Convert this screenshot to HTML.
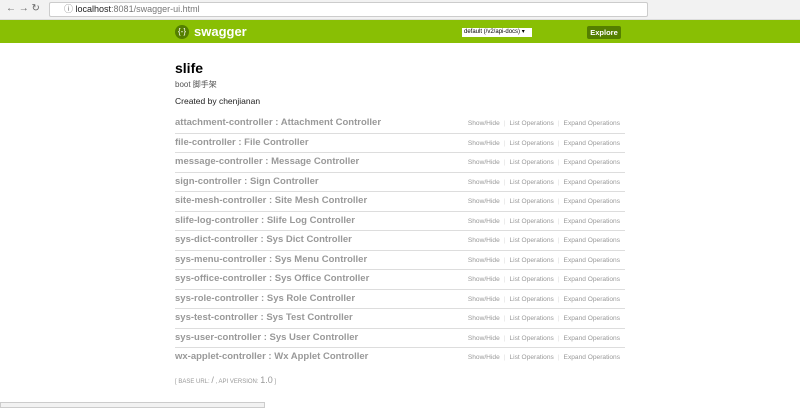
<!DOCTYPE html><html><head><style>
*{margin:0;padding:0;box-sizing:border-box}
body{width:800px;height:408px;overflow:hidden;background:#fff;font-family:"Liberation Sans",sans-serif;position:relative}
.chrome{position:absolute;top:0;left:0;width:800px;height:20px;background:#f2f2f2;border-bottom:1px solid #ddd}
.url{position:absolute;left:49px;top:2px;width:599px;height:15px;background:#fff;border:1px solid #ccc;border-radius:2px;font-size:9px;line-height:13px;padding-left:14px;color:#777}
.url b{color:#222;font-weight:normal}
.hdr{position:absolute;top:20px;left:0;width:800px;height:23px;background:#89bf04}
.logo{position:absolute;left:175px;top:5px;width:14px;height:14px;border-radius:50%;background:#547f00;color:#fff;font-size:8px;text-align:center;line-height:14px}
.brand{position:absolute;left:194px;top:4px;color:#fff;font-weight:bold;font-size:13px}
.sel{position:absolute;left:462px;top:8px;width:70px;height:9px;background:#fff;font-size:6px;line-height:9px;padding-left:2px;color:#000}
.exp{position:absolute;left:587px;top:6px;width:34px;height:13px;background:#547f00;border-radius:2px;color:#fff;font-weight:bold;font-size:7.5px;text-align:center;line-height:13px}
h1{position:absolute;left:175px;top:60px;font-size:14px;font-weight:bold;color:#000}
.d1{position:absolute;left:175px;top:79px;font-size:8px;color:#555;font-family:"Liberation Sans","Noto Sans CJK SC",sans-serif}
.d2{position:absolute;left:175px;top:96px;font-size:8.5px;color:#222}
.row{position:absolute;left:175px;width:450px;height:19.5px;border-bottom:1px solid #ddd}
.row .t{position:absolute;left:0;top:3px;font-size:9.5px;font-weight:bold;color:#999}
.row .l{position:absolute;right:5px;top:6px;font-size:6.6px;color:#999}
.row .l i{font-style:normal;color:#ddd;margin:0 4px}
.foot{position:absolute;left:175px;top:375px;font-size:6px;color:#999}
.foot span{font-size:9px}
.status{position:absolute;left:0;top:402px;width:265px;height:6px;background:#f2f2f2;border:1px solid #ccc}
</style></head><body>
<div class="chrome"><span style="position:absolute;left:6px;top:3px;font-size:10px;color:#666">← → ↻</span><div class="url">ⓘ <b>localhost</b>:8081/swagger-ui.html</div></div>
<div class="hdr"><div class="logo">{-}</div><div class="brand">swagger</div><div class="sel">default (/v2/api-docs) ▾</div><div class="exp">Explore</div></div>
<h1>slife</h1><div class="d1">boot 脚手架</div><div class="d2">Created by chenjianan</div>
<div class="row" style="top:114px"><div class="t">attachment-controller : Attachment Controller</div><div class="l">Show/Hide<i>|</i>List Operations<i>|</i>Expand Operations</div></div>
<div class="row" style="top:133.5px"><div class="t">file-controller : File Controller</div><div class="l">Show/Hide<i>|</i>List Operations<i>|</i>Expand Operations</div></div>
<div class="row" style="top:153px"><div class="t">message-controller : Message Controller</div><div class="l">Show/Hide<i>|</i>List Operations<i>|</i>Expand Operations</div></div>
<div class="row" style="top:172.5px"><div class="t">sign-controller : Sign Controller</div><div class="l">Show/Hide<i>|</i>List Operations<i>|</i>Expand Operations</div></div>
<div class="row" style="top:192px"><div class="t">site-mesh-controller : Site Mesh Controller</div><div class="l">Show/Hide<i>|</i>List Operations<i>|</i>Expand Operations</div></div>
<div class="row" style="top:211.5px"><div class="t">slife-log-controller : Slife Log Controller</div><div class="l">Show/Hide<i>|</i>List Operations<i>|</i>Expand Operations</div></div>
<div class="row" style="top:231px"><div class="t">sys-dict-controller : Sys Dict Controller</div><div class="l">Show/Hide<i>|</i>List Operations<i>|</i>Expand Operations</div></div>
<div class="row" style="top:250.5px"><div class="t">sys-menu-controller : Sys Menu Controller</div><div class="l">Show/Hide<i>|</i>List Operations<i>|</i>Expand Operations</div></div>
<div class="row" style="top:270px"><div class="t">sys-office-controller : Sys Office Controller</div><div class="l">Show/Hide<i>|</i>List Operations<i>|</i>Expand Operations</div></div>
<div class="row" style="top:289.5px"><div class="t">sys-role-controller : Sys Role Controller</div><div class="l">Show/Hide<i>|</i>List Operations<i>|</i>Expand Operations</div></div>
<div class="row" style="top:309px"><div class="t">sys-test-controller : Sys Test Controller</div><div class="l">Show/Hide<i>|</i>List Operations<i>|</i>Expand Operations</div></div>
<div class="row" style="top:328.5px"><div class="t">sys-user-controller : Sys User Controller</div><div class="l">Show/Hide<i>|</i>List Operations<i>|</i>Expand Operations</div></div>
<div class="row" style="top:348px;border-bottom:none"><div class="t">wx-applet-controller : Wx Applet Controller</div><div class="l">Show/Hide<i>|</i>List Operations<i>|</i>Expand Operations</div></div>
<div class="foot">[ BASE URL: <span>/</span> , API VERSION: <span>1.0</span> ]</div>
<div class="status"></div>
</body></html>
